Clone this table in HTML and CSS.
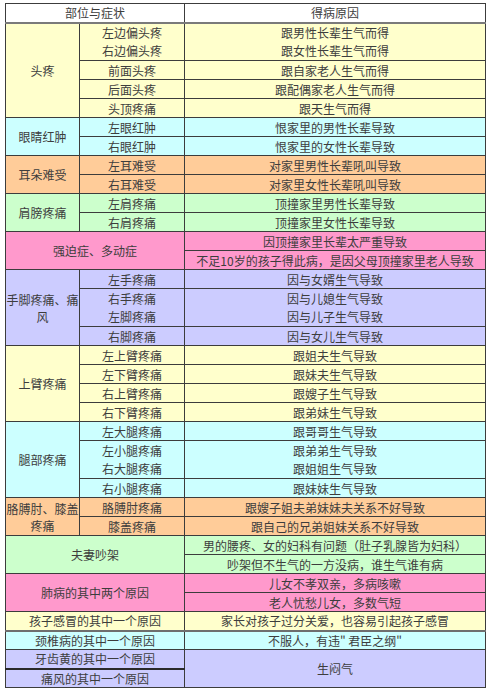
FILE: index.html
```html
<!DOCTYPE html>
<html lang="zh-CN">
<head>
<meta charset="utf-8">
<title>部位与症状</title>
<link rel="stylesheet" href="styles.css">
</head>
<body>
<table class="sheet">
  <colgroup><col class="c1"><col class="c2"><col class="c3"></colgroup>
  <thead>
    <tr class="head"><th colspan="2">部位与症状</th><th>得病原因</th></tr>
  </thead>
  <tbody>
    <tr class="yellow"><td rowspan="5">头疼</td><td class="nb">左边偏头疼</td><td class="nb">跟男性长辈生气而得</td></tr>
    <tr class="yellow"><td>右边偏头疼</td><td>跟女性长辈生气而得</td></tr>
    <tr class="yellow"><td>前面头疼</td><td>跟自家老人生气而得</td></tr>
    <tr class="yellow"><td>后面头疼</td><td>跟配偶家老人生气而得</td></tr>
    <tr class="yellow"><td>头顶疼痛</td><td>跟天生气而得</td></tr>

    <tr class="cyan"><td rowspan="2">眼睛红肿</td><td>左眼红肿</td><td>恨家里的男性长辈导致</td></tr>
    <tr class="cyan"><td>右眼红肿</td><td>恨家里的女性长辈导致</td></tr>

    <tr class="orange"><td rowspan="2">耳朵难受</td><td>左耳难受</td><td>对家里男性长辈吼叫导致</td></tr>
    <tr class="orange"><td>右耳难受</td><td>对家里女性长辈吼叫导致</td></tr>

    <tr class="green"><td rowspan="2">肩膀疼痛</td><td>左肩疼痛</td><td>顶撞家里男性长辈导致</td></tr>
    <tr class="green"><td>右肩疼痛</td><td>顶撞家里女性长辈导致</td></tr>

    <tr class="pink"><td rowspan="2" colspan="2">强迫症、多动症</td><td>因顶撞家里长辈太严重导致</td></tr>
    <tr class="pink"><td>不足10岁的孩子得此病，是因父母顶撞家里老人导致</td></tr>

    <tr class="lav"><td rowspan="4" class="wr">手脚疼痛、痛风</td><td>左手疼痛</td><td>因与女婿生气导致</td></tr>
    <tr class="lav"><td class="nb">右手疼痛</td><td class="nb">因与儿媳生气导致</td></tr>
    <tr class="lav"><td>左脚疼痛</td><td>因与儿子生气导致</td></tr>
    <tr class="lav"><td>右脚疼痛</td><td>因与女儿生气导致</td></tr>

    <tr class="yellow"><td rowspan="4">上臂疼痛</td><td>左上臂疼痛</td><td>跟姐夫生气导致</td></tr>
    <tr class="yellow"><td>左下臂疼痛</td><td>跟妹夫生气导致</td></tr>
    <tr class="yellow"><td>右上臂疼痛</td><td>跟嫂子生气导致</td></tr>
    <tr class="yellow"><td>右下臂疼痛</td><td>跟弟妹生气导致</td></tr>

    <tr class="cyan"><td rowspan="4">腿部疼痛</td><td>左大腿疼痛</td><td>跟哥哥生气导致</td></tr>
    <tr class="cyan"><td class="nb">左小腿疼痛</td><td class="nb">跟弟弟生气导致</td></tr>
    <tr class="cyan"><td>右大腿疼痛</td><td>跟姐姐生气导致</td></tr>
    <tr class="cyan"><td>右小腿疼痛</td><td>跟妹妹生气导致</td></tr>

    <tr class="orange"><td rowspan="2" class="wr">胳膊肘、膝盖疼痛</td><td>胳膊肘疼痛</td><td>跟嫂子姐夫弟妹妹夫关系不好导致</td></tr>
    <tr class="orange"><td>膝盖疼痛</td><td>跟自己的兄弟姐妹关系不好导致</td></tr>

    <tr class="green"><td rowspan="2" colspan="2">夫妻吵架</td><td>男的腰疼、女的妇科有问题（肚子乳腺皆为妇科）</td></tr>
    <tr class="green"><td>吵架但不生气的一方没病，谁生气谁有病</td></tr>

    <tr class="pink"><td rowspan="2" colspan="2">肺病的其中两个原因</td><td>儿女不孝双亲，多病咳嗽</td></tr>
    <tr class="pink"><td>老人忧愁儿女，多数气短</td></tr>

    <tr class="yellow thick"><td colspan="2">孩子感冒的其中一个原因</td><td>家长对孩子过分关爱，也容易引起孩子感冒</td></tr>
    <tr class="cyan"><td colspan="2">颈椎病的其中一个原因</td><td>不服人，有违" 君臣之纲"</td></tr>
    <tr class="lav"><td colspan="2" class="dark">牙齿黄的其中一个原因</td><td rowspan="2">生闷气</td></tr>
    <tr class="lav"><td colspan="2">痛风的其中一个原因</td></tr>
  </tbody>
</table>
</body>
</html>
```

FILE: styles.css
```css
html, body {
  margin: 0;
  padding: 0;
  background: #ffffff;
}

body {
  padding: 3px 0 0 5px;
  font-family: "Noto Sans CJK SC", "Noto Sans", sans-serif;
  font-size: 12px;
  color: #3d3d3d;
}

.sheet {
  border-collapse: collapse;
  table-layout: fixed;
  width: 480px;
}

.c1 { width: 74px; }
.c2 { width: 105px; }
.c3 { width: 301px; }

.sheet tr {
  height: 19px;
}

.sheet th,
.sheet td {
  border: 1px solid #3c3c3c;
  padding: 0;
  text-align: center;
  vertical-align: middle;
  line-height: 17px;
  font-weight: normal;
  white-space: nowrap;
  overflow: hidden;
}

.sheet td.wr {
  white-space: normal;
}

.head th {
  background: #ffffff;
  border-bottom: 2px solid #7a7a7a;
}

.sheet td.nb {
  border-bottom-style: hidden;
}

.thick td {
  border-bottom: 2px solid #6e6e6e;
}

.sheet td.dark {
  border-bottom: 2px solid #2a2a2a;
}

.yellow td { background: #ffffcc; }
.cyan td { background: #ccffff; }
.orange td { background: #ffcc99; }
.green td { background: #ccffcc; }
.pink td { background: #ff99cc; }
.lav td { background: #ccccff; }
```
